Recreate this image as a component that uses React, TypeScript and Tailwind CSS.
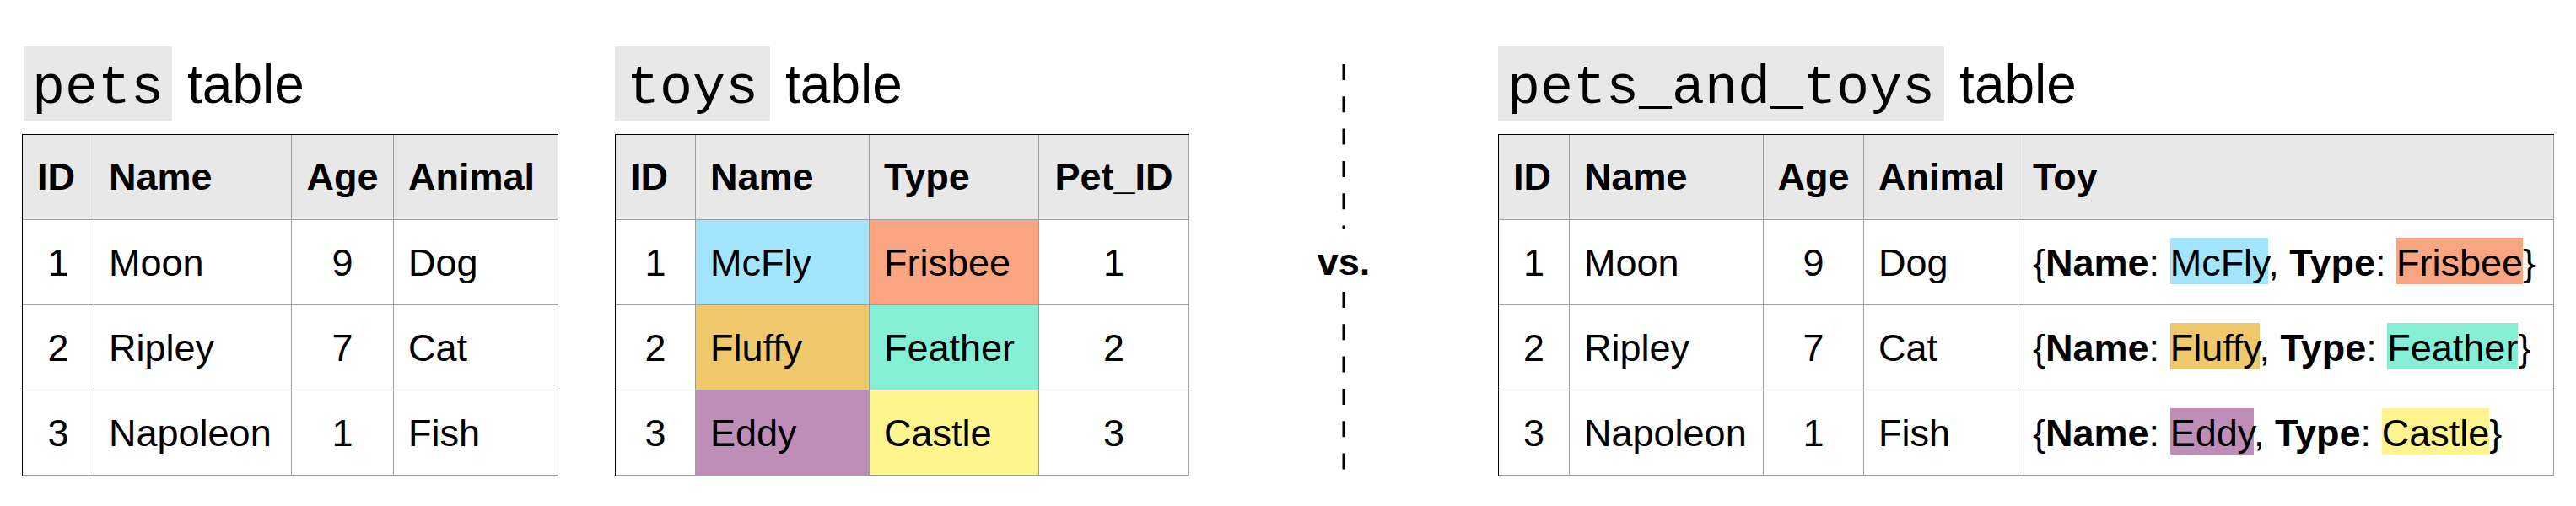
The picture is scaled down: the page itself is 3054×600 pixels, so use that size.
import React from "react";

type HeadCell = { label: string; center?: boolean };
type BodyCell = { text: React.ReactNode; center?: boolean; bg?: string };

const line = "border-r border-b border-[#9e9e9e]";

const Title = ({ name, box }: { name: string; box: string }) => {
  return (
    <div className="flex items-baseline">
      <span
        className={`h-[88px] bg-[#e8e8e8] pt-[18px] font-['Liberation_Mono','Courier_New',monospace] text-[65px] leading-[65px] ${box}`}>
        {name}
      </span>
      <span className="ml-[18px] text-[64px] leading-[64px]">table</span>
    </div>
  );
};

const DataTable = ({
  grid,
  header,
  rows,
}: {
  grid: string;
  header: HeadCell[];
  rows: BodyCell[][];
}) => {
  return (
    <div className={`mt-[16px] grid ${grid} border-t border-l border-black text-[45px]`}>
      {header.map((h, i) => (
        <div
          key={"h" + i}
          className={`flex h-[101px] items-center bg-[#e8e8e8] font-bold ${line} ${
            h.center ? "justify-center" : "pl-[17px]"
          }`}>
          {h.label}
        </div>
      ))}
      {rows.map((row, i) =>
        row.map((c, j) => (
          <div
            key={i + "-" + j}
            className={`flex h-[101px] items-center whitespace-nowrap pt-[2px] ${line} ${
              c.bg ?? "bg-white"
            } ${c.center ? "justify-center" : "pl-[17px]"}`}>
            {c.text}
          </div>
        ))
      )}
    </div>
  );
};

const Toy = ({
  name,
  nameBg,
  type,
  typeBg,
}: {
  name: string;
  nameBg: string;
  type: string;
  typeBg: string;
}) => {
  return (
    <span>
      {"{"}
      <span className="font-bold">Name</span>:{" "}
      <span className={`pt-[4px] ${nameBg}`}>{name}</span>,{" "}
      <span className="font-bold">Type</span>:{" "}
      <span className={`pt-[4px] ${typeBg}`}>{type}</span>
      {"}"}
    </span>
  );
};

const DashSegment = ({ height }: { height: number }) => {
  return (
    <svg width="4" height={height} className="block">
      <line
        x1="2"
        y1="0"
        x2="2"
        y2={height}
        stroke="#000"
        strokeWidth="3"
        strokeDasharray="19 19.3"
      />
    </svg>
  );
};

const pets: BodyCell[][] = [
  [{ text: "1", center: true }, { text: "Moon" }, { text: "9", center: true }, { text: "Dog" }],
  [{ text: "2", center: true }, { text: "Ripley" }, { text: "7", center: true }, { text: "Cat" }],
  [{ text: "3", center: true }, { text: "Napoleon" }, { text: "1", center: true }, { text: "Fish" }],
];

const toys: BodyCell[][] = [
  [
    { text: "1", center: true },
    { text: "McFly", bg: "bg-[#a3e5fd]" },
    { text: "Frisbee", bg: "bg-[#f9a582]" },
    { text: "1", center: true },
  ],
  [
    { text: "2", center: true },
    { text: "Fluffy", bg: "bg-[#eec86a]" },
    { text: "Feather", bg: "bg-[#85efd6]" },
    { text: "2", center: true },
  ],
  [
    { text: "3", center: true },
    { text: "Eddy", bg: "bg-[#bf8eb8]" },
    { text: "Castle", bg: "bg-[#fff58e]" },
    { text: "3", center: true },
  ],
];

const petsAndToys: BodyCell[][] = [
  [
    ...pets[0],
    { text: <Toy name="McFly" nameBg="bg-[#a3e5fd]" type="Frisbee" typeBg="bg-[#f9a582]" /> },
  ],
  [
    ...pets[1],
    { text: <Toy name="Fluffy" nameBg="bg-[#eec86a]" type="Feather" typeBg="bg-[#85efd6]" /> },
  ],
  [
    ...pets[2],
    { text: <Toy name="Eddy" nameBg="bg-[#bf8eb8]" type="Castle" typeBg="bg-[#fff58e]" /> },
  ],
];

const App = () => {
  return (
    <div className="flex min-h-[600px] bg-white pl-[26px] pt-[55px] font-['Liberation_Sans',Arial,Helvetica,sans-serif] text-black">
      <div className="w-[636px]">
        <div className="ml-[2px]">
          <Title name="pets" box="px-[10px]" />
        </div>
        <DataTable
          grid="grid-cols-[85px_234px_121px_195px]"
          header={[{ label: "ID" }, { label: "Name" }, { label: "Age", center: true }, { label: "Animal" }]}
          rows={pets}
        />
      </div>

      <div className="ml-[67px] w-[681px]">
        <Title name="toys" box="px-[14px]" />
        <DataTable
          grid="grid-cols-[95px_206px_201px_178px]"
          header={[{ label: "ID" }, { label: "Name" }, { label: "Type" }, { label: "Pet_ID", center: true }]}
          rows={toys}
        />
      </div>

      <div className="flex w-[366px] flex-col items-center pt-[21px]">
        <DashSegment height={195} />
        <div className="h-[75px] text-[45px] font-bold leading-[79px]">vs.</div>
        <DashSegment height={211} />
      </div>

      <div className="w-[1252px]">
        <Title name="pets_and_toys" box="px-[11px]" />
        <DataTable
          grid="grid-cols-[84px_230px_119px_183px_635px]"
          header={[
            { label: "ID" },
            { label: "Name" },
            { label: "Age", center: true },
            { label: "Animal" },
            { label: "Toy" },
          ]}
          rows={petsAndToys}
        />
      </div>
    </div>
  );
};

export default App;
